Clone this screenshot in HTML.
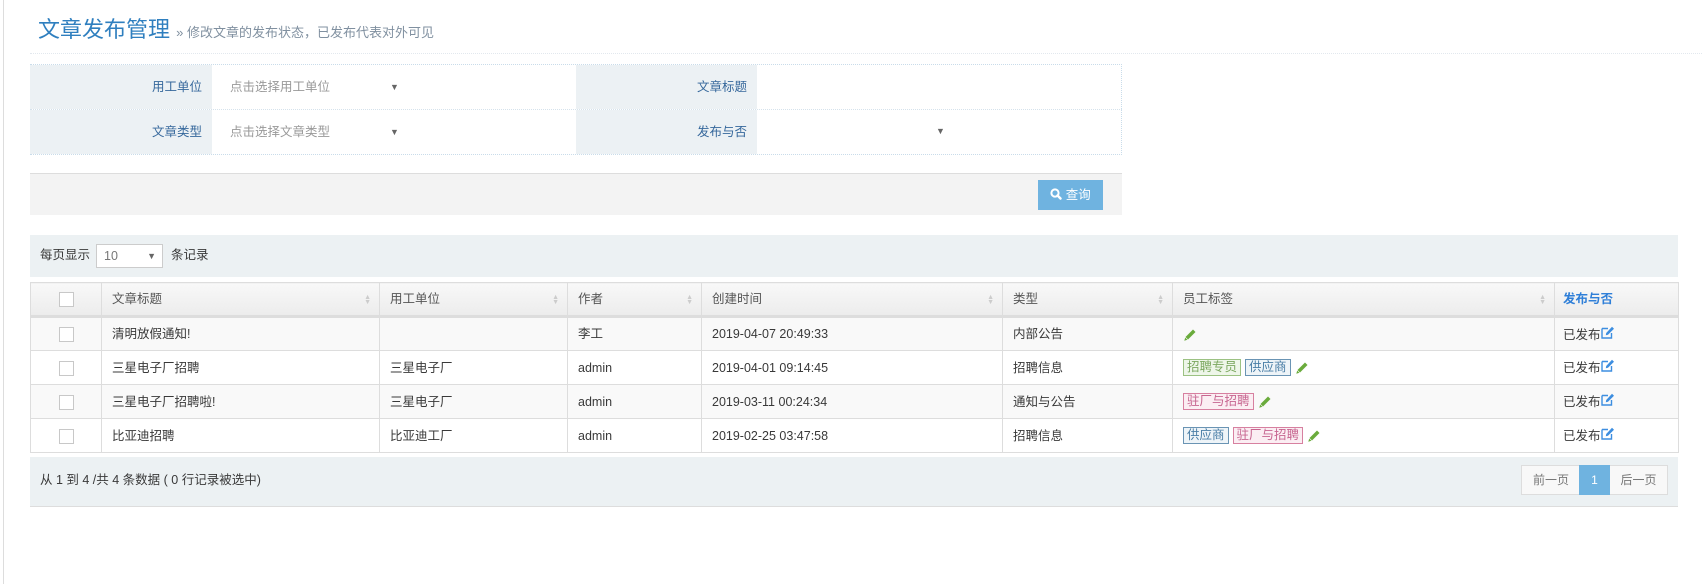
<!DOCTYPE html>
<html><head><meta charset="utf-8"><style>
*{margin:0;padding:0;box-sizing:border-box}
body{width:1702px;height:584px;background:#fff;font-family:"Liberation Sans","Noto Sans CJK SC",sans-serif;font-size:12px;color:#393939;position:relative;overflow:hidden}
.a{position:absolute}
.lbl{background:#ecf1f4;color:#36689c;text-align:right;padding-right:10px;font-size:12.5px}
.ph{color:#999;font-size:12.5px}
.arr{font-size:9px;color:#666}
table{border-collapse:collapse;position:absolute;left:30px;top:282px;width:1648px;font-size:12.5px;table-layout:fixed}
th{height:34px;text-align:left;font-weight:normal;padding-left:10px;border:1px solid #ddd;border-bottom:3px solid #ddd;background:linear-gradient(#f8f8f8,#ececec);color:#555;position:relative;line-height:16px}
td{height:34px;padding-left:10px;border:1px solid #ddd;color:#393939;line-height:16px}
tr.o td{background:#f9f9f9}
.cb{display:inline-block;width:15px;height:15px;border:1px solid #c8c8c8;background:#fff;vertical-align:middle}
.c0{text-align:center;padding:0!important}
.sort{position:absolute;right:8px;top:12px;color:#ccc;font-size:7px;line-height:5px}
.tag{display:inline-block;border:1px solid;padding:0 3px;height:17px;line-height:15px;margin-right:4px;font-size:12.5px;vertical-align:middle}
.g{border-color:#9cc283;color:#7ca860;background:#eef6e9}
.b{border-color:#6a94b4;color:#4a7ea6;background:#eef4f8}
.p{border-color:#d780a0;color:#c76690;background:#fbeef3}
.pen{display:inline-block;vertical-align:middle}
.ed{display:inline-block;vertical-align:0px}
</style></head><body>
<div class="a" style="left:3px;top:0;width:1px;height:584px;background:#ddd"></div>
<div class="a" style="left:38px;top:12px;font-size:22px;color:#2f7fbf">文章发布管理 <span style="font-size:13px;color:#8090a0">» 修改文章的发布状态，已发布代表对外可见</span></div>
<div class="a" style="left:30px;top:53px;width:1672px;border-top:1px dotted #e2e8ee"></div>

<div class="a" style="left:30px;top:64px;width:1092px;height:91px;border:1px dotted #c9dcea"></div>
<div class="a lbl" style="left:30px;top:65px;width:182px;height:44px;line-height:44px">用工单位</div>
<div class="a lbl" style="left:30px;top:110px;width:182px;height:44px;line-height:44px">文章类型</div>
<div class="a" style="left:30px;top:109px;width:1092px;border-top:1px dotted #d5e2ec"></div>
<div class="a ph" style="left:230px;top:65px;line-height:44px">点击选择用工单位</div>
<div class="a ph" style="left:230px;top:110px;line-height:44px">点击选择文章类型</div>
<div class="a arr" style="left:390px;top:82px">▼</div>
<div class="a arr" style="left:390px;top:127px">▼</div>
<div class="a lbl" style="left:576px;top:65px;width:181px;height:44px;line-height:44px">文章标题</div>
<div class="a lbl" style="left:576px;top:110px;width:181px;height:44px;line-height:44px">发布与否</div>
<div class="a arr" style="left:936px;top:126px">▼</div>

<div class="a" style="left:30px;top:173px;width:1092px;height:42px;background:#f3f3f3;border-top:1px solid #ddd"></div>
<div class="a" style="left:1038px;top:180px;width:65px;height:30px;background:#6fb3e0;color:#fff;font-size:12.5px;line-height:30px;text-align:center"><svg width="12" height="12" viewBox="0 0 12 12" style="vertical-align:-1px"><circle cx="5" cy="5" r="3.6" fill="none" stroke="#fff" stroke-width="2"/><path d="M7.5 7.5L10.5 10.5" stroke="#fff" stroke-width="2.4" stroke-linecap="round"/></svg> 查询</div>

<div class="a" style="left:30px;top:235px;width:1648px;height:42px;background:#ecf1f3"></div>
<div class="a" style="left:40px;top:248px;font-size:12.5px;line-height:14px">每页显示</div>
<div class="a" style="left:96px;top:244px;width:67px;height:24px;border:1px solid #ccc;background:#fff;color:#777;padding-left:7px;line-height:22px;font-size:12.5px">10<span class="arr" style="position:absolute;right:6px;top:0">▼</span></div>
<div class="a" style="left:171px;top:248px;font-size:12.5px;line-height:14px">条记录</div>

<table>
<colgroup><col style="width:71px"><col style="width:278px"><col style="width:188px"><col style="width:134px"><col style="width:301px"><col style="width:170px"><col style="width:382px"><col style="width:124px"></colgroup>
<tr><th class="c0"><span class="cb"></span></th><th>文章标题<span class="sort">▲<br>▼</span></th><th>用工单位<span class="sort">▲<br>▼</span></th><th>作者<span class="sort">▲<br>▼</span></th><th>创建时间<span class="sort">▲<br>▼</span></th><th>类型<span class="sort">▲<br>▼</span></th><th>员工标签<span class="sort">▲<br>▼</span></th><th style="color:#2f7fd8;font-weight:bold;padding-left:8px">发布与否</th></tr>
<tr class="o"><td class="c0"><span class="cb"></span></td><td>清明放假通知!</td><td></td><td>李工</td><td>2019-04-07 20:49:33</td><td>内部公告</td><td><svg class="pen" width="14" height="14" viewBox="0 0 14 14"><path d="M10 1.5L12.5 4L5 11.5L2.5 9Z" fill="#6aab3c"/><path d="M2.2 9.6L4.4 11.8L1.3 12.7Z" fill="#6aab3c"/></svg></td><td style="padding-left:8px">已发布<svg class="ed" width="14" height="13" viewBox="0 0 14 13"><path d="M1 2.5H7M1 2.5V12H10.5V7" fill="none" stroke="#3d8ee0" stroke-width="1.4"/><path d="M11 0.8L13 2.8L7 8.8L4.8 9.2L5.2 7Z" fill="#3d8ee0"/></svg></td></tr>
<tr><td class="c0"><span class="cb"></span></td><td>三星电子厂招聘</td><td>三星电子厂</td><td>admin</td><td>2019-04-01 09:14:45</td><td>招聘信息</td><td><span class="tag g">招聘专员</span><span class="tag b">供应商</span><svg class="pen" width="14" height="14" viewBox="0 0 14 14"><path d="M10 1.5L12.5 4L5 11.5L2.5 9Z" fill="#6aab3c"/><path d="M2.2 9.6L4.4 11.8L1.3 12.7Z" fill="#6aab3c"/></svg></td><td style="padding-left:8px">已发布<svg class="ed" width="14" height="13" viewBox="0 0 14 13"><path d="M1 2.5H7M1 2.5V12H10.5V7" fill="none" stroke="#3d8ee0" stroke-width="1.4"/><path d="M11 0.8L13 2.8L7 8.8L4.8 9.2L5.2 7Z" fill="#3d8ee0"/></svg></td></tr>
<tr class="o"><td class="c0"><span class="cb"></span></td><td>三星电子厂招聘啦!</td><td>三星电子厂</td><td>admin</td><td>2019-03-11 00:24:34</td><td>通知与公告</td><td><span class="tag p">驻厂与招聘</span><svg class="pen" width="14" height="14" viewBox="0 0 14 14"><path d="M10 1.5L12.5 4L5 11.5L2.5 9Z" fill="#6aab3c"/><path d="M2.2 9.6L4.4 11.8L1.3 12.7Z" fill="#6aab3c"/></svg></td><td style="padding-left:8px">已发布<svg class="ed" width="14" height="13" viewBox="0 0 14 13"><path d="M1 2.5H7M1 2.5V12H10.5V7" fill="none" stroke="#3d8ee0" stroke-width="1.4"/><path d="M11 0.8L13 2.8L7 8.8L4.8 9.2L5.2 7Z" fill="#3d8ee0"/></svg></td></tr>
<tr><td class="c0"><span class="cb"></span></td><td>比亚迪招聘</td><td>比亚迪工厂</td><td>admin</td><td>2019-02-25 03:47:58</td><td>招聘信息</td><td><span class="tag b">供应商</span><span class="tag p">驻厂与招聘</span><svg class="pen" width="14" height="14" viewBox="0 0 14 14"><path d="M10 1.5L12.5 4L5 11.5L2.5 9Z" fill="#6aab3c"/><path d="M2.2 9.6L4.4 11.8L1.3 12.7Z" fill="#6aab3c"/></svg></td><td style="padding-left:8px">已发布<svg class="ed" width="14" height="13" viewBox="0 0 14 13"><path d="M1 2.5H7M1 2.5V12H10.5V7" fill="none" stroke="#3d8ee0" stroke-width="1.4"/><path d="M11 0.8L13 2.8L7 8.8L4.8 9.2L5.2 7Z" fill="#3d8ee0"/></svg></td></tr>
</table>

<div class="a" style="left:30px;top:457px;width:1648px;height:50px;background:#ecf1f3;border-bottom:1px solid #ddd"></div>
<div class="a" style="left:40px;top:473px;font-size:12.5px;line-height:14px">从 1 到 4 /共 4 条数据 ( 0 行记录被选中)</div>
<div class="a" style="left:1521px;top:465px;width:59px;height:30px;border:1px solid #ddd;border-right:none;background:#f8f8f8;color:#777;text-align:center;line-height:28px">前一页</div>
<div class="a" style="left:1579px;top:465px;width:31px;height:30px;background:#6fb3e0;color:#fff;text-align:center;line-height:30px">1</div>
<div class="a" style="left:1610px;top:465px;width:58px;height:30px;border:1px solid #ddd;border-left:none;background:#f8f8f8;color:#777;text-align:center;line-height:28px">后一页</div>
</body></html>
